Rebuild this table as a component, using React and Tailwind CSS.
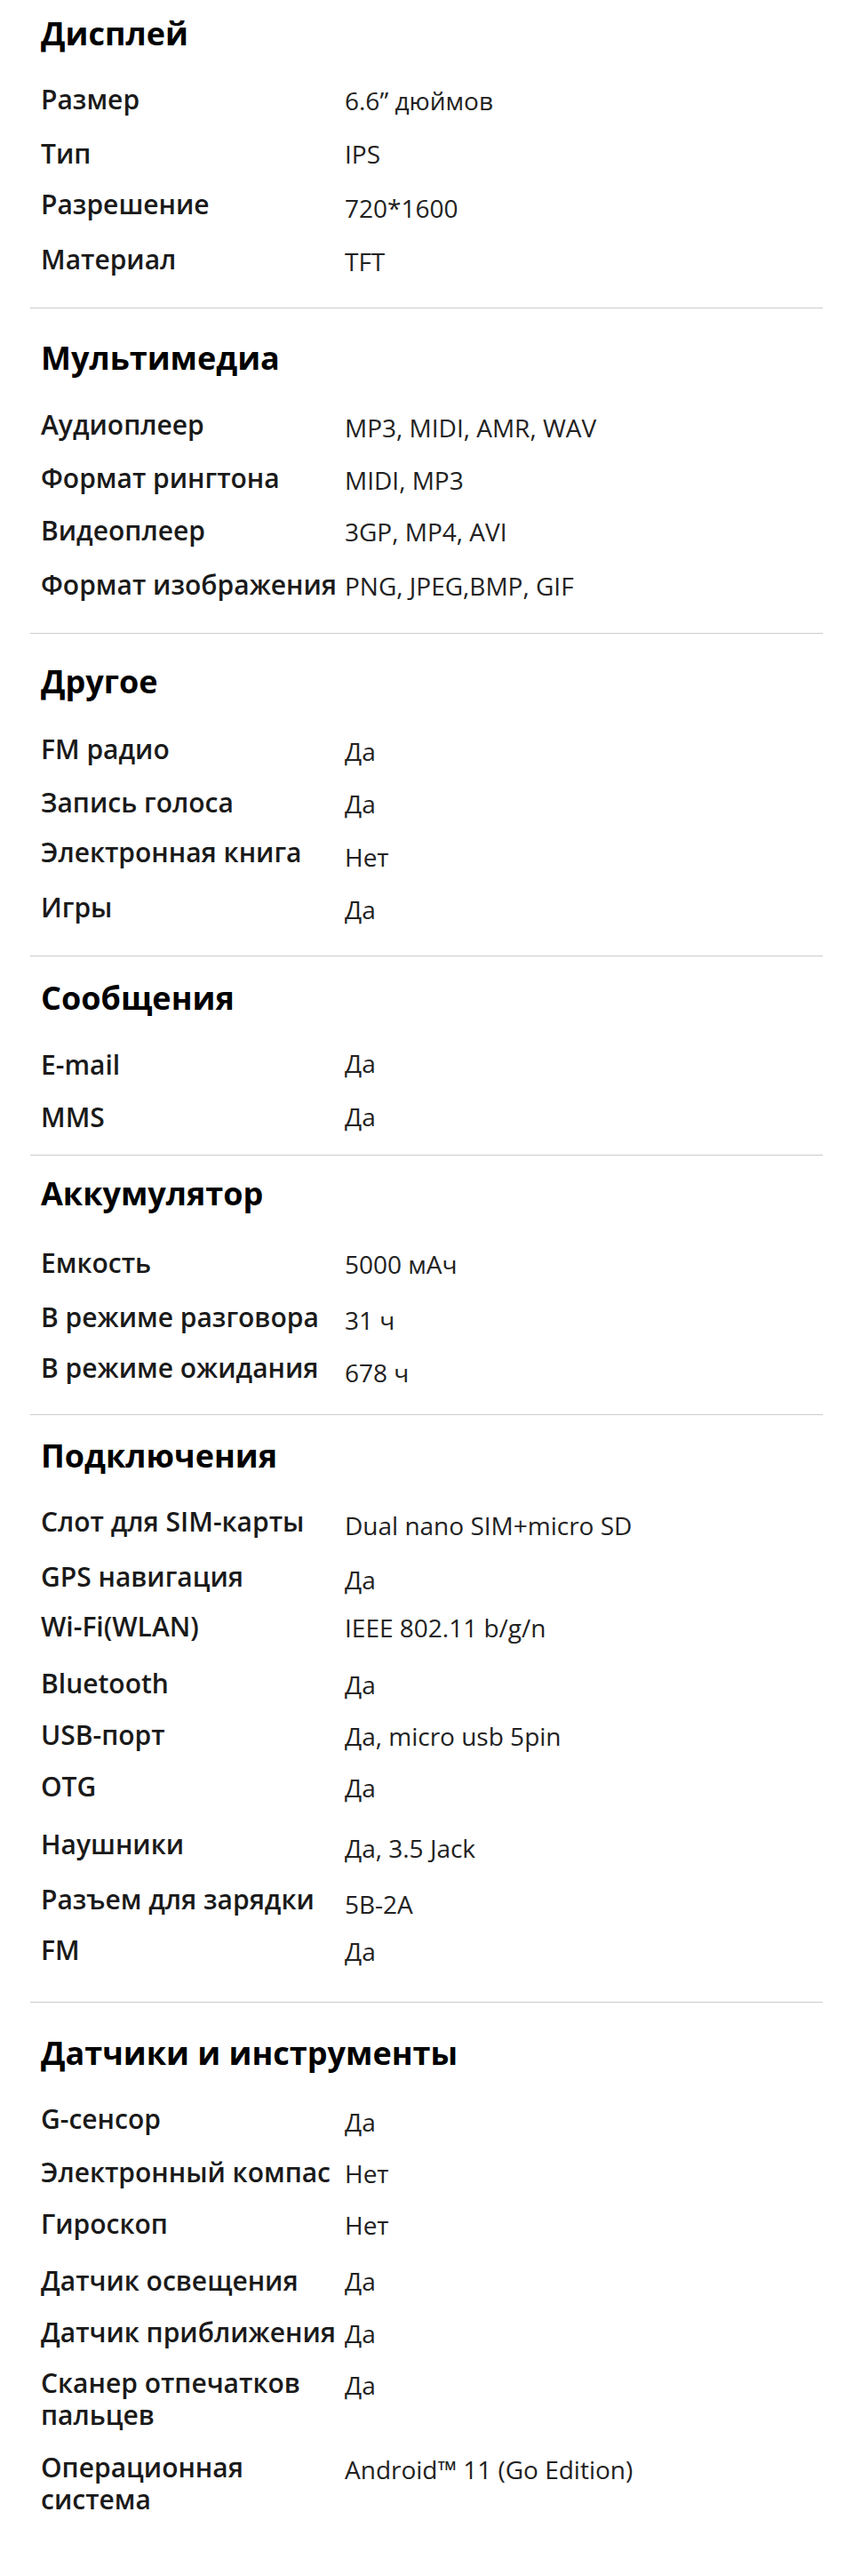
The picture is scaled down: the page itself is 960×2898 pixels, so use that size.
const sections = [
  {
    title: "Дисплей",
    box: "pt-[16px] pb-[36px]",
    body: "mt-[34px]",
    rows: [
      ["Размер", "6.6” дюймов", "", "translate-y-[1px]"],
      ["Тип", "IPS", "mt-[25px]", "translate-y-0"],
      ["Разрешение", "720*1600", "mt-[21px]", "translate-y-[4px]"],
      ["Материал", "TFT", "mt-[26px]", "translate-y-[2px]"],
    ],
  },
  {
    title: "Мультимедиа",
    box: "pt-[34px] pb-[36px]",
    body: "mt-[35px]",
    rows: [
      ["Аудиоплеер", "MP3, MIDI, AMR, WAV", "", "translate-y-[3px]"],
      ["Формат рингтона", "MIDI, MP3", "mt-[24px]", "translate-y-[2px]"],
      ["Видеоплеер", "3GP, MP4, AVI", "mt-[23px]", "translate-y-[1px]"],
      ["Формат изображения", "PNG, JPEG,BMP, GIF", "mt-[25px]", "translate-y-[1px]"],
    ],
  },
  {
    title: "Другое",
    box: "pt-[32px] pb-[36px]",
    body: "mt-[36px]",
    rows: [
      ["FM радио", "Да", "", "translate-y-[2px]"],
      ["Запись голоса", "Да", "mt-[24px]", "translate-y-[1px]"],
      ["Электронная книга", "Нет", "mt-[20px]", "translate-y-[5px]"],
      ["Игры", "Да", "mt-[26px]", "translate-y-[2px]"],
    ],
  },
  {
    title: "Сообщения",
    box: "pt-[25px] pb-[24px]",
    body: "mt-[35px]",
    rows: [
      ["E-mail", "Да", "", "-translate-y-[2px]"],
      ["MMS", "Да", "mt-[23px]", "-translate-y-[1px]"],
    ],
  },
  {
    title: "Аккумулятор",
    box: "pt-[21px] pb-[34px]",
    body: "mt-[38px]",
    rows: [
      ["Емкость", "5000 мАч", "", "translate-y-[1px]"],
      ["В режиме разговора", "31 ч", "mt-[25px]", "translate-y-[3px]"],
      ["В режиме ожидания", "678 ч", "mt-[21px]", "translate-y-[5px]"],
    ],
  },
  {
    title: "Подключения",
    box: "pt-[24px] pb-[40px]",
    body: "mt-[34px]",
    rows: [
      ["Слот для SIM-карты", "Dual nano SIM+micro SD", "", "translate-y-[4px]"],
      ["GPS навигация", "Да", "mt-[26px]", "translate-y-[3px]"],
      ["Wi-Fi(WLAN)", "IEEE 802.11 b/g/n", "mt-[20px]", "translate-y-[1px]"],
      ["Bluetooth", "Да", "mt-[28px]", "translate-y-[1px]"],
      ["USB-порт", "Да, micro usb 5pin", "mt-[22px]", "translate-y-[1px]"],
      ["OTG", "Да", "mt-[22px]", "translate-y-[1px]"],
      ["Наушники", "Да, 3.5 Jack", "mt-[29px]", "translate-y-[4px]"],
      ["Разъем для зарядки", "5B-2A", "mt-[26px]", "translate-y-[5px]"],
      ["FM", "Да", "mt-[21px]", "translate-y-[1px]"],
    ],
  },
  {
    title: "Датчики и инструменты",
    box: "pt-[35px] pb-[71px]",
    body: "mt-[34px]",
    rows: [
      ["G-сенсор", "Да", "", "translate-y-[3px]"],
      ["Электронный компас", "Нет", "mt-[24px]", "translate-y-[1px]"],
      ["Гироскоп", "Нет", "mt-[22px]", "translate-y-[1px]"],
      ["Датчик освещения", "Да", "mt-[28px]", "translate-y-0"],
      ["Датчик приближения", "Да", "mt-[22px]", "translate-y-[1px]"],
      ["Сканер отпечатков пальцев", "Да", "mt-[21px]", "translate-y-[2px]"],
      ["Операционная система", "Android™ 11 (Go Edition)", "mt-[23px]", "translate-y-[2px]"],
    ],
  },
];

function SpecRow({ label, value, top, shift }) {
  return (
    <div className={`grid grid-cols-[342px_1fr] items-start ${top}`}>
      <div className="text-[30px] leading-[36px] font-semibold text-[#1a1a1a]">
        {label}
      </div>
      <div className={`text-[28px] leading-[36px] text-[#222222] ${shift}`}>
        {value}
      </div>
    </div>
  );
}

export default function App() {
  return (
    <div
      className="w-[960px] bg-white px-[34px]"
      style={{ fontFamily: '"Open Sans", "Noto Sans", sans-serif' }}
    >
      {sections.map((section, i) => (
        <div key={section.title}>
          <section className={`px-[12px] ${section.box}`}>
            <h2 className="text-[36px] leading-[44px] font-bold text-black">
              {section.title}
            </h2>
            <div className={section.body}>
              {section.rows.map(([label, value, top, shift]) => (
                <SpecRow
                  key={label}
                  label={label}
                  value={value}
                  top={top}
                  shift={shift}
                />
              ))}
            </div>
          </section>
          {i < sections.length - 1 && <div className="h-px bg-[#cccccc]" />}
        </div>
      ))}
    </div>
  );
}
